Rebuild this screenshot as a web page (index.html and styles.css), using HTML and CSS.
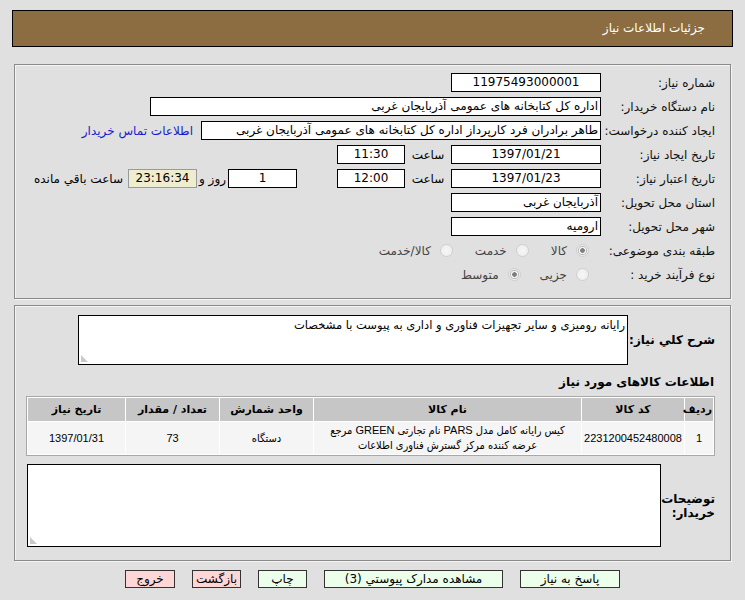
FILE: index.html
```html
<!DOCTYPE html>
<html lang="fa" dir="rtl">
<head>
<meta charset="utf-8">
<title>جزئیات اطلاعات نیاز</title>
<link rel="stylesheet" href="styles.css">
</head>
<body>
<div class="page">
  <div class="header">جزئیات اطلاعات نیاز</div>

  <div class="box box-info">
    <div class="row">
      <span class="label">شماره نیاز:</span>
      <span class="field w150 center">11975493000001</span>
    </div>
    <div class="row">
      <span class="label">نام دستگاه خریدار:</span>
      <span class="field w451">اداره کل کتابخانه های عمومی آذربایجان غربی</span>
    </div>
    <div class="row">
      <span class="label">ایجاد کننده درخواست:</span>
      <span class="field w400">طاهر برادران فرد کارپرداز اداره کل کتابخانه های عمومی آذربایجان غربی</span>
      <a class="link" href="#">اطلاعات تماس خریدار</a>
    </div>
    <div class="row">
      <span class="label">تاریخ ایجاد نیاز:</span>
      <span class="field w150 center">1397/01/21</span>
      <span class="word w46">ساعت</span>
      <span class="field w68 center">11:30</span>
    </div>
    <div class="row">
      <span class="label">تاریخ اعتبار نیاز:</span>
      <span class="field w150 center">1397/01/23</span>
      <span class="word w46">ساعت</span>
      <span class="field w68 center">12:00</span>
      <span class="field w69 center gap40">1</span>
      <span class="word w31">روز و</span>
      <span class="field w69 center timer">23:16:34</span>
      <span class="word after">ساعت باقي مانده</span>
    </div>
    <div class="row">
      <span class="label">استان محل تحویل:</span>
      <span class="field w150">آذربایجان غربی</span>
    </div>
    <div class="row">
      <span class="label">شهر محل تحویل:</span>
      <span class="field w150">ارومیه</span>
    </div>
    <div class="row radios">
      <span class="label">طبقه بندی موضوعی:</span>
      <span class="radio checked"></span><span class="rtext">کالا</span>
      <span class="radio"></span><span class="rtext">خدمت</span>
      <span class="radio"></span><span class="rtext">کالا/خدمت</span>
    </div>
    <div class="row radios">
      <span class="label">نوع فرآیند خرید :</span>
      <span class="radio"></span><span class="rtext">جزیی</span>
      <span class="radio checked near"></span><span class="rtext">متوسط</span>
    </div>
  </div>

  <div class="box box-detail">
    <div class="desc-row">
      <span class="blabel w87">شرح کلي نیاز:</span>
      <div class="area area-desc">رایانه رومیزی و سایر تجهیزات فناوری و اداری به پیوست با مشخصات<span class="grip"></span></div>
    </div>
    <div class="section-title">اطلاعات کالاهای مورد نیاز</div>
    <table class="items">
      <thead>
        <tr>
          <th class="c1">ردیف</th>
          <th class="c2">کد کالا</th>
          <th class="c3">نام کالا</th>
          <th class="c4">واحد شمارش</th>
          <th class="c5">تعداد / مقدار</th>
          <th class="c6">تاریخ نیاز</th>
        </tr>
      </thead>
      <tbody>
        <tr>
          <td>1</td>
          <td>2231200452480008</td>
          <td class="name">کیس رایانه کامل مدل PARS نام تجارتی GREEN مرجع عرضه کننده مرکز گسترش فناوری اطلاعات</td>
          <td>دستگاه</td>
          <td>73</td>
          <td>1397/01/31</td>
        </tr>
      </tbody>
    </table>
    <div class="notes-row">
      <span class="blabel w54">توضیحات خریدار:</span>
      <div class="area area-notes"><span class="grip"></span></div>
    </div>
  </div>

  <div class="buttons">
    <span class="btn green b-reply">پاسخ به نیاز</span>
    <span class="btn green b-docs">مشاهده مدارک پیوستي (3)</span>
    <span class="btn green b-print">چاپ</span>
    <span class="btn pink b-back">بازگشت</span>
    <span class="btn pink b-exit">خروج</span>
  </div>
</div>
</body>
</html>
```

FILE: styles.css
```css
html, body {
  margin: 0;
  padding: 0;
  background: #e0e0e0;
}
body {
  font-family: "DejaVu Sans", sans-serif;
  font-size: 12px;
  color: #000;
}
.page {
  width: 745px;
  padding-top: 10px;
}
.header {
  margin: 0 12px;
  height: 35px;
  border: 1px solid #000;
  background: #8c6d42;
  color: #fff;
  font-size: 12px;
  line-height: 35px;
  padding-right: 27px;
}
.box {
  margin: 0 14px;
  border: 1px solid #8a8a8a;
  box-shadow: 1px 1px 0 #f4f4f4, inset 1px 1px 0 #f4f4f4;
}
.box-info {
  margin-top: 17px;
  padding: 8px 15px 9px 0;
  height: 216px;
}
.row {
  display: flex;
  align-items: center;
  height: 19px;
  margin-bottom: 5px;
}
.label {
  width: 114px;
  flex: none;
  text-align: right;
  color: #111;
}
.field {
  flex: none;
  box-sizing: border-box;
  height: 19px;
  line-height: 17px;
  border: 1px solid #000;
  background: #fff;
  padding: 0 2px;
  white-space: nowrap;
  overflow: hidden;
  text-align: right;
}
.field.center { text-align: center; }
.w150 { width: 150px; }
.w451 { width: 451px; }
.w400 { width: 400px; }
.w68 { width: 68px; }
.w69 { width: 69px; }
.w46 { width: 46px; }
.w31 { width: 31px; }
.word {
  flex: none;
  text-align: center;
  white-space: nowrap;
}
.gap40 { margin-right: 40px; }
.timer {
  background: #efedcf;
  border-color: #9a9a9a;
}
.after { margin-right: 5px; }
.link {
  color: #1a1acc;
  text-decoration: none;
  margin-right: 8px;
  white-space: nowrap;
}
.radio {
  flex: none;
  box-sizing: border-box;
  width: 13px;
  height: 13px;
  border-radius: 50%;
  border: 1px solid #cfcfcf;
  background: radial-gradient(circle, #f6f6f6 0, #ececec 100%);
  margin-right: 22px;
  margin-left: 9px;
}
.radios .label + .radio { margin-right: 12px; }
.radio.near { margin-right: 19px; }
.radio.checked {
  background: radial-gradient(circle, #7e7e7e 0, #7e7e7e 2px, #f4f4f4 2.6px, #f4f4f4 3.4px, #b8b8b8 4px, #ececec 5px);
}
.rtext {
  color: #444;
  white-space: nowrap;
}

.box-detail {
  margin-top: 6px;
  padding: 9px 15px 13px 12px;
}
.desc-row {
  display: flex;
  align-items: center;
}
.blabel {
  flex: none;
  font-weight: bold;
  font-size: 12px;
  text-align: right;
}
.w87 { width: 87px; }
.w54 { width: 54px; }
.area {
  position: relative;
  box-sizing: border-box;
  border: 1px solid #000;
  background: #fff;
  padding: 2px 2px;
  font-size: 11.5px;
  line-height: 14px;
}
.area-desc {
  width: 550px;
  height: 50px;
}
.grip {
  position: absolute;
  left: 2px;
  bottom: 2px;
  width: 7px;
  height: 7px;
  background:
    radial-gradient(circle, #aaa 0.6px, transparent 0.9px) 0 0 / 2px 2px;
  clip-path: polygon(0 0, 100% 100%, 0 100%);
}
.section-title {
  font-weight: bold;
  margin-top: 9px;
  height: 16px;
  line-height: 16px;
  margin-right: 1px;
}
.items {
  margin-top: 6px;
  width: 689px;
  border: 1px solid #a8a8a8;
  border-spacing: 1px;
  background: #fff;
  font-size: 11px;
  table-layout: fixed;
}
.items th {
  background: #c6c6c6;
  height: 23px;
  font-weight: bold;
  padding: 0 2px;
  text-align: center;
  white-space: nowrap;
}
.items td {
  background: #f5f5f5;
  height: 30px;
  padding: 1px 2px;
  text-align: center;
  line-height: 15px;
  font-family: "Liberation Sans", "DejaVu Sans Condensed", "DejaVu Sans", sans-serif;
  font-size: 11px;
}
.items td.name { padding: 1px 12px; }
.items th.c1 { width: 26px; padding: 0 1px; }
.items th.c2 { width: 98px; }
.items th.c4 { width: 89px; }
.items th.c5 { width: 89px; }
.items th.c6 { width: 93px; }
.notes-row {
  display: flex;
  align-items: center;
  margin-top: 8px;
}
.area-notes {
  width: 636px;
  height: 83px;
}
.buttons {
  display: flex;
  justify-content: center;
  gap: 17px;
  margin-top: 9px;
}
.btn {
  box-sizing: border-box;
  height: 18px;
  line-height: 16px;
  border: 1px solid #333;
  text-align: center;
  font-size: 12px;
  white-space: nowrap;
}
.green { background: #ebffeb; }
.pink { background: #ffd6d6; }
.b-reply { width: 100px; }
.b-docs { width: 179px; }
.b-print { width: 49px; }
.b-back { width: 49px; }
.b-exit { width: 50px; }
```
